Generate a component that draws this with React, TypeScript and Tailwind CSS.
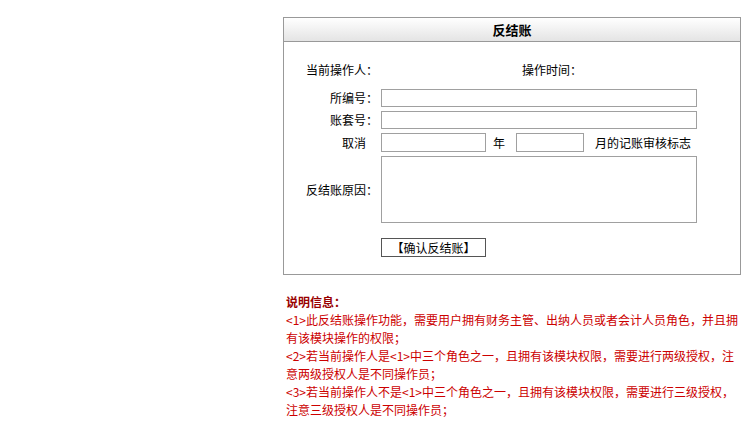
export default function App() {
  return (
    <div className="min-h-[423px] w-[745px] bg-white text-[12px] leading-[18px] text-black font-['Noto_Sans_CJK_SC','Noto_Sans',sans-serif]">
      <div className="ml-[283px] w-[458px] pt-[17px]">
        {/* Panel */}
        <div className="border border-[#999]">
          <div className="flex h-[24px] items-center justify-center border-b border-[#999] bg-gradient-to-b from-white to-[#e4e4e4] text-[13px] font-bold">
            反结账
          </div>

          <div className="pt-[18px] pb-[17px]">
            <div className="flex h-[20px] items-center">
              <span className="w-[94px] text-right">当前操作人：</span>
              <span className="ml-[144px]">操作时间：</span>
            </div>

            <div className="mt-[9px] flex flex-col gap-[4px]">
              <Row label="所编号：">
                <input className="h-[18px] w-[316px] border border-[#a0a0a0] outline-none" />
              </Row>
              <Row label="账套号：">
                <input className="h-[18px] w-[316px] border border-[#a0a0a0] outline-none" />
              </Row>
              <div className="flex h-[19px] items-center">
                <span className="w-[94px] pr-[12px] text-right">取消</span>
                <input className="ml-[3px] h-[19px] w-[105px] border border-[#a0a0a0] outline-none" />
                <span className="ml-[7px]">年</span>
                <input className="ml-[11px] h-[19px] w-[68px] border border-[#a0a0a0] outline-none" />
                <span className="ml-[11px]">月的记账审核标志</span>
              </div>
              <Row label="反结账原因：">
                <textarea className="h-[67px] w-[316px] resize-none border border-[#a0a0a0] outline-none" />
              </Row>
            </div>

            <div className="mt-[15px] flex">
              <button className="ml-[97px] flex h-[19px] w-[105px] items-center justify-center border border-[#555] bg-white text-[12px] leading-none">
                【确认反结账】
              </button>
            </div>
          </div>
        </div>

        {/* 说明 */}
        <div className="mt-[18px] ml-[3px] whitespace-nowrap text-[#cc0000]">
          <div className="font-bold text-[#990000]">说明信息：</div>
          <div>&lt;1&gt;此反结账操作功能，需要用户拥有财务主管、出纳人员或者会计人员角色，并且拥</div>
          <div>有该模块操作的权限；</div>
          <div>&lt;2&gt;若当前操作人是&lt;1&gt;中三个角色之一，且拥有该模块权限，需要进行两级授权，注</div>
          <div>意两级授权人是不同操作员；</div>
          <div>&lt;3&gt;若当前操作人不是&lt;1&gt;中三个角色之一，且拥有该模块权限，需要进行三级授权，</div>
          <div>注意三级授权人是不同操作员；</div>
        </div>
      </div>
    </div>
  );
}

function Row({ label, children }: { label: string; children: React.ReactNode }) {
  return (
    <div className="flex items-center">
      <span className="w-[94px] text-right">{label}</span>
      <div className="ml-[3px] flex">{children}</div>
    </div>
  );
}
